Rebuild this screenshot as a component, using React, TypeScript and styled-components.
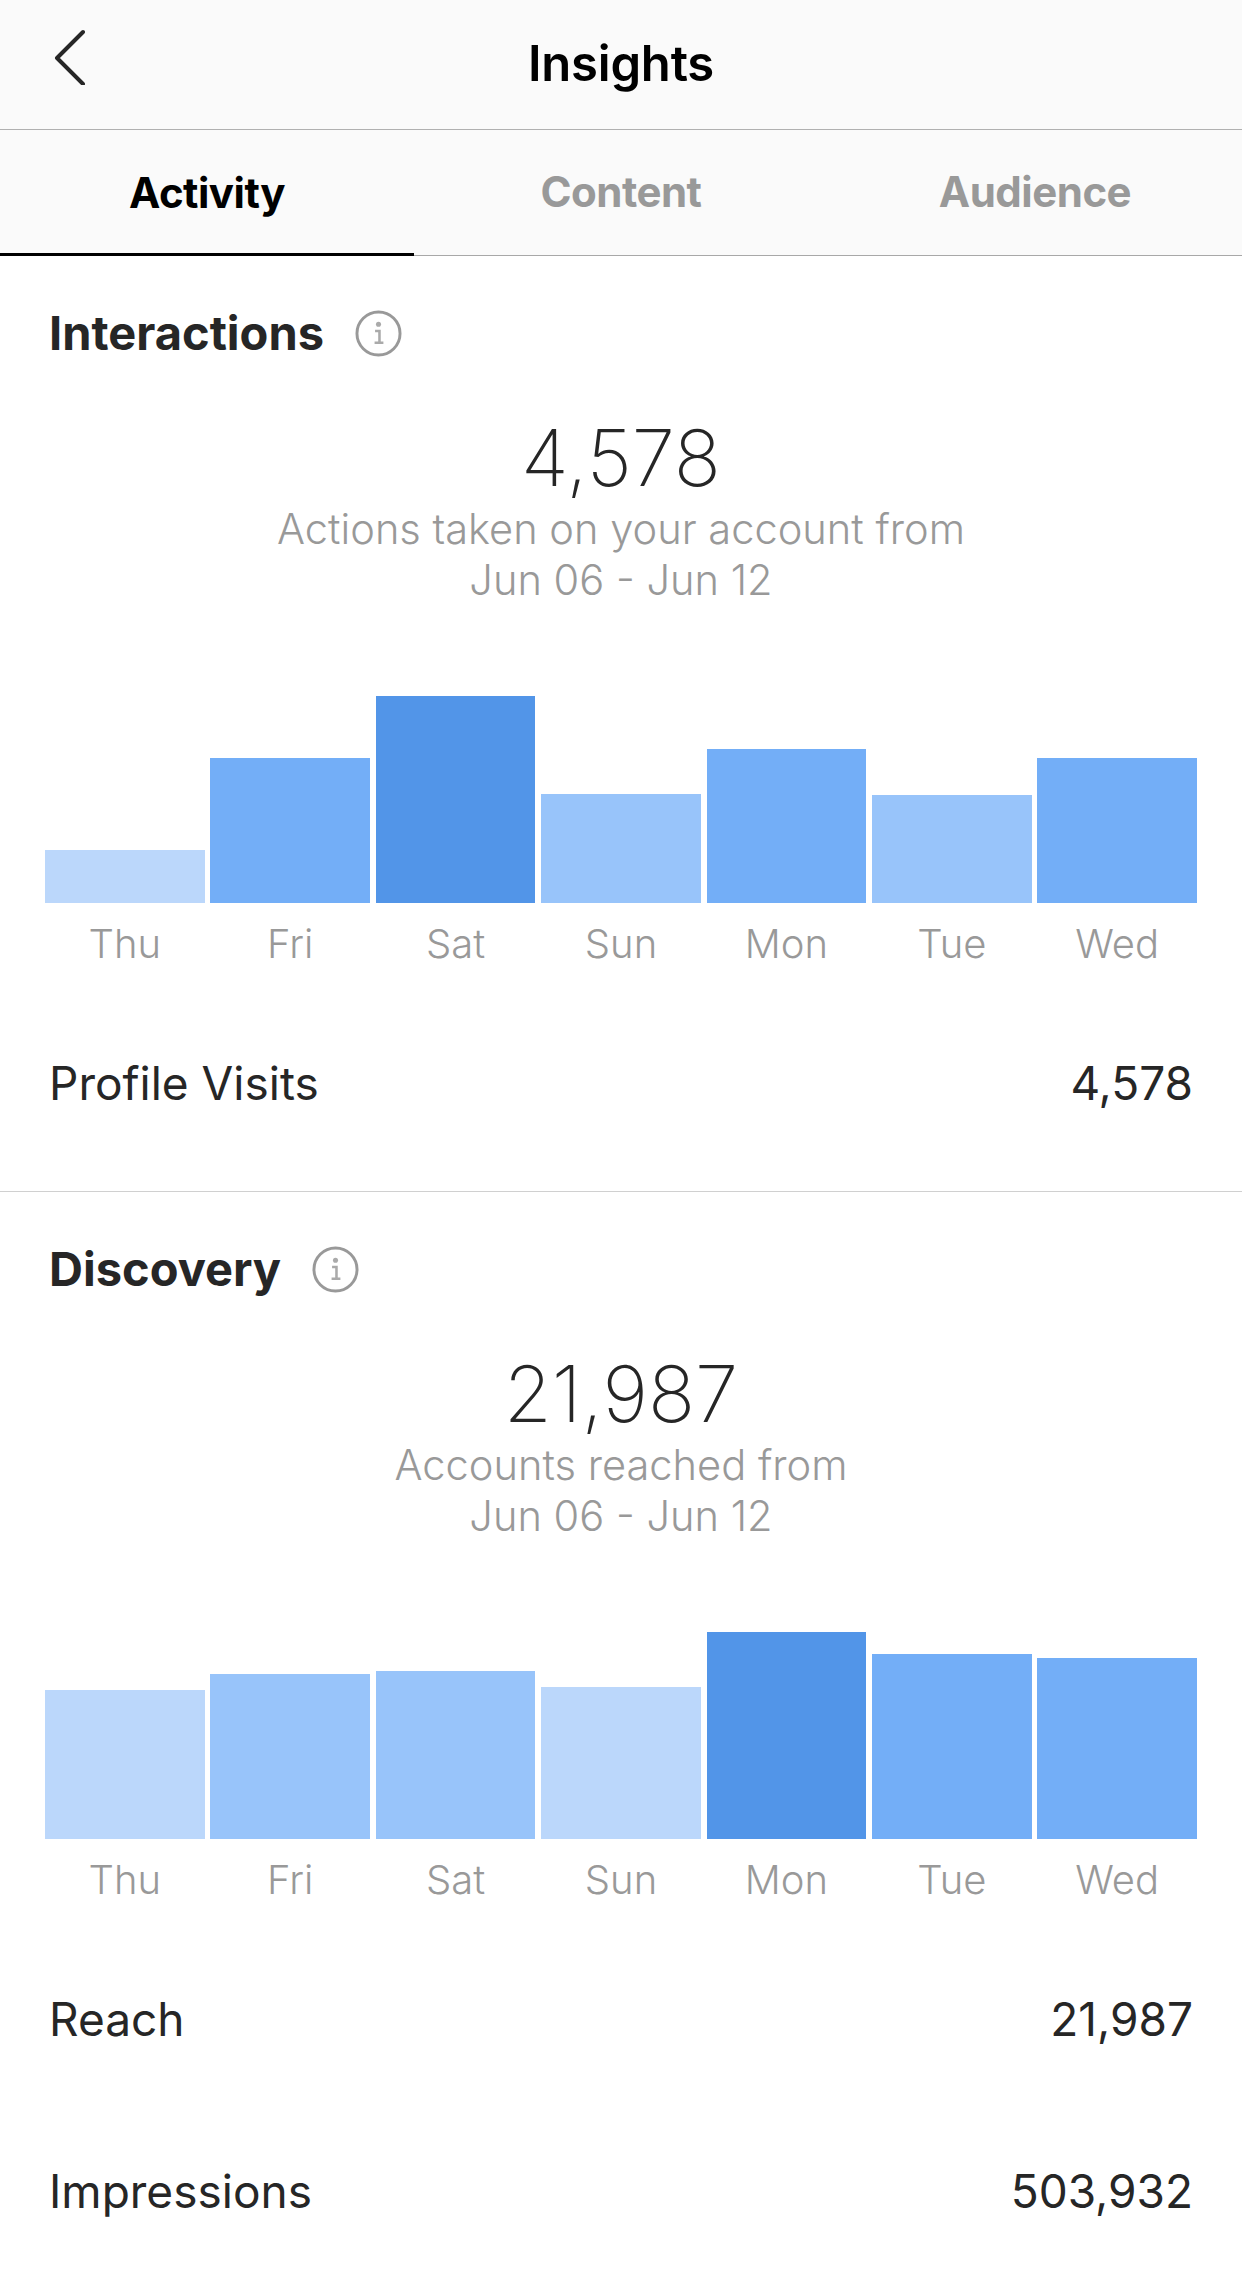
import React from 'react';
import styled, { createGlobalStyle } from 'styled-components';

const GlobalStyle = createGlobalStyle`
	html, body {
		margin: 0;
		padding: 0;
		background: #fff;
	}

	body {
		font-family: Inter, "Liberation Sans", sans-serif;
	}
`;

const Page = styled.div`
	width: 1242px;
	height: 2282px;
	overflow: hidden;
	background: #fff;
`;

const Header = styled.header`
	height: 129px;
	position: relative;
	background: #fafafa;
	border-bottom: 1px solid #b0b0b0;
`;

const BackIcon = styled.svg`
	position: absolute;
	left: 53px;
	top: 29px;
	width: 32px;
	height: 56px;
`;

const Title = styled.h1`
	margin: 0;
	padding-top: 32px;
	text-align: center;
	font-size: 49px;
	line-height: 64px;
	font-weight: 600;
	letter-spacing: -0.2px;
	color: #000;
`;

const Tabs = styled.nav`
	height: 125px;
	display: grid;
	grid-template-columns: repeat(3, 1fr);
	background: #fafafa;
	border-bottom: 1px solid #a8a8a8;
`;

const Tab = styled.div<{ $active?: boolean }>`
	display: flex;
	align-items: center;
	justify-content: center;
	padding-bottom: ${({ $active }) => ($active ? '0' : '3px')};
	font-size: 42px;
	font-weight: 700;
	letter-spacing: -0.5px;
	color: ${({ $active }) => ($active ? '#000' : '#999')};
	box-shadow: ${({ $active }) => ($active ? 'inset 0 -2px 0 #000, 0 1px 0 #000' : 'none')};
`;

const Section = styled.section<{ $divided?: boolean }>`
	box-sizing: border-box;
	padding: 50px 0 0;
	height: ${({ $divided }) => ($divided ? '936px' : 'auto')};
	border-bottom: ${({ $divided }) => ($divided ? '1px solid #d0d0d0' : 'none')};
`;

const SectionHead = styled.div`
	height: 54px;
	padding-left: 49px;
	display: flex;
	align-items: center;
	gap: 31px;
`;

const SectionTitle = styled.h2`
	margin: 0;
	font-size: 47px;
	line-height: 54px;
	font-weight: 700;
	color: #262626;
`;

const InfoIcon = styled.svg`
	width: 47px;
	height: 47px;
	flex: none;
`;

const Summary = styled.div`
	margin-top: 54px;
	text-align: center;
`;

const BigNumber = styled.div`
	font-size: 78px;
	line-height: 88px;
	font-weight: 250;
	color: #262626;
`;

const Caption = styled.div`
	font-size: 41.6px;
	line-height: 51px;
	font-weight: 300;
	color: #999;
	margin-top: 2px;
`;

const Chart = styled.div`
	height: 207px;
	margin-top: 90px;
	padding: 0 45px;
	display: grid;
	grid-template-columns: repeat(7, 1fr);
	column-gap: 5.8px;
	align-items: end;
`;

const shades = ['#bbd7fb', '#98c4fa', '#73aef7', '#5295e8'];

const Bar = styled.div<{ $shade: number }>`
	background: ${({ $shade }) => shades[$shade]};
`;

const Days = styled.div`
	margin-top: 19px;
	padding: 0 45px;
	display: grid;
	grid-template-columns: repeat(7, 1fr);
	column-gap: 5.8px;
`;

const Day = styled.div`
	text-align: center;
	font-size: 40px;
	line-height: 44px;
	font-weight: 300;
	color: #999;
`;

const Rows = styled.div`
	margin-top: 89px;
	display: flex;
	flex-direction: column;
	gap: 116px;
	padding: 0 49px;
`;

const Row = styled.div`
	height: 56px;
	display: flex;
	align-items: center;
	justify-content: space-between;
	font-size: 46px;
	font-weight: 400;
	color: #262626;
`;

const DAYS = ['Thu', 'Fri', 'Sat', 'Sun', 'Mon', 'Tue', 'Wed'];

type Insight = {
	title: string;
	total: string;
	caption: string;
	bars: { height: number; shade: number }[];
	rows: [string, string][];
};

const INSIGHTS: Insight[] = [
	{
		title: 'Interactions',
		total: '4,578',
		caption: 'Actions taken on your account from',
		bars: [
			{ height: 53, shade: 0 },
			{ height: 145, shade: 2 },
			{ height: 207, shade: 3 },
			{ height: 109, shade: 1 },
			{ height: 154, shade: 2 },
			{ height: 108, shade: 1 },
			{ height: 145, shade: 2 },
		],
		rows: [['Profile Visits', '4,578']],
	},
	{
		title: 'Discovery',
		total: '21,987',
		caption: 'Accounts reached from',
		bars: [
			{ height: 149, shade: 0 },
			{ height: 165, shade: 1 },
			{ height: 168, shade: 1 },
			{ height: 152, shade: 0 },
			{ height: 207, shade: 3 },
			{ height: 185, shade: 2 },
			{ height: 181, shade: 2 },
		],
		rows: [
			['Reach', '21,987'],
			['Impressions', '503,932'],
		],
	},
];

const Info = () => (
	<InfoIcon viewBox="0 0 48 48" fill="none">
		<circle cx="24" cy="24" r="22" stroke="#999" strokeWidth="3" />
		<circle cx="24" cy="14.5" r="2.6" fill="#aaa" />
		<path d="M20.5 21.5H25V33M20 33.5h9" stroke="#aaa" strokeWidth="2.6" />
	</InfoIcon>
);

export default function App() {
	return (
		<Page>
			<GlobalStyle />
			<Header>
				<BackIcon viewBox="0 0 32 56" fill="none">
					<path
						d="M30 3 4 29l26 26"
						stroke="#262626"
						strokeWidth="4"
						strokeLinecap="round"
						strokeLinejoin="round"
					/>
				</BackIcon>
				<Title>Insights</Title>
			</Header>
			<Tabs>
				<Tab $active>Activity</Tab>
				<Tab>Content</Tab>
				<Tab>Audience</Tab>
			</Tabs>
			{INSIGHTS.map((item, index) => (
				<Section key={item.title} $divided={index === 0}>
					<SectionHead>
						<SectionTitle>{item.title}</SectionTitle>
						<Info />
					</SectionHead>
					<Summary>
						<BigNumber>{item.total}</BigNumber>
						<Caption>
							{item.caption}
							<br />
							Jun 06 - Jun 12
						</Caption>
					</Summary>
					<Chart>
						{item.bars.map((bar, i) => (
							<Bar key={DAYS[i]} $shade={bar.shade} style={{ height: bar.height }} />
						))}
					</Chart>
					<Days>
						{DAYS.map((day) => (
							<Day key={day}>{day}</Day>
						))}
					</Days>
					<Rows>
						{item.rows.map(([label, value]) => (
							<Row key={label}>
								<span>{label}</span>
								<span>{value}</span>
							</Row>
						))}
					</Rows>
				</Section>
			))}
		</Page>
	);
}
